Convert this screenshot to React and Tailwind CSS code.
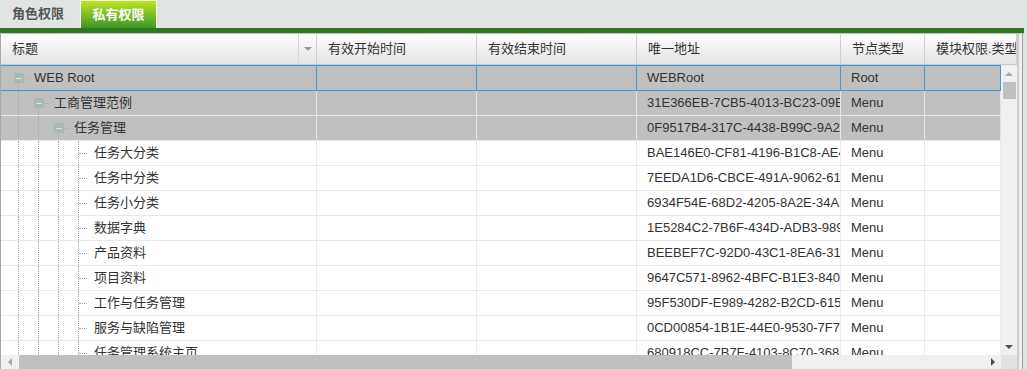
import React from 'react'

const cols = [
  { key: 'title', label: '标题', w: 316 },
  { key: 'start', label: '有效开始时间', w: 160 },
  { key: 'end', label: '有效结束时间', w: 160 },
  { key: 'url', label: '唯一地址', w: 204 },
  { key: 'type', label: '节点类型', w: 84 },
  { key: 'perm', label: '模块权限.类型', w: 92 },
]

const rows = [
  { title: 'WEB Root', level: 0, folder: true, url: 'WEBRoot', type: 'Root', hl: true, sel: true },
  { title: '工商管理范例', level: 1, folder: true, url: '31E366EB-7CB5-4013-BC23-09E', type: 'Menu', hl: true },
  { title: '任务管理', level: 2, folder: true, url: '0F9517B4-317C-4438-B99C-9A2', type: 'Menu', hl: true },
  { title: '任务大分类', level: 3, url: 'BAE146E0-CF81-4196-B1C8-AE4', type: 'Menu' },
  { title: '任务中分类', level: 3, url: '7EEDA1D6-CBCE-491A-9062-61', type: 'Menu' },
  { title: '任务小分类', level: 3, url: '6934F54E-68D2-4205-8A2E-34A', type: 'Menu' },
  { title: '数据字典', level: 3, url: '1E5284C2-7B6F-434D-ADB3-989', type: 'Menu' },
  { title: '产品资料', level: 3, url: 'BEEBEF7C-92D0-43C1-8EA6-31', type: 'Menu' },
  { title: '项目资料', level: 3, url: '9647C571-8962-4BFC-B1E3-840', type: 'Menu' },
  { title: '工作与任务管理', level: 3, url: '95F530DF-E989-4282-B2CD-615', type: 'Menu' },
  { title: '服务与缺陷管理', level: 3, url: '0CD00854-1B1E-44E0-9530-7F7', type: 'Menu' },
  { title: '任务管理系统主页', level: 3, url: '680918CC-7B7F-4103-8C70-368', type: 'Menu' },
]

function Guide() {
  return (
    <span className="w-[20px] h-full flex justify-center shrink-0">
      <span className="w-0 h-full border-l border-dotted border-[#a8a8a8]" />
    </span>
  )
}

function TreeCell({ row }) {
  const guides = []
  for (let i = 0; i < row.level; i++) guides.push(<Guide key={i} />)
  return (
    <div className="flex items-center h-full pl-[7px]">
      {guides}
      {row.folder ? (
        <span className="w-[20px] h-full relative shrink-0 flex items-center">
          <span className="absolute left-[10px] top-1/2 h-1/2 border-l border-dotted border-[#a8a8a8]" />
          <span className="absolute left-[15px] top-1/2 w-[5px] border-t border-dotted border-[#a8a8a8]" />
          <span className="relative ml-[6px] w-[10px] h-[10px] bg-[#a9bab3] flex items-center justify-center">
            <span className="w-[6px] h-px bg-[#dfe7e3]" />
          </span>
        </span>
      ) : (
        <span className="w-[20px] h-full relative shrink-0">
          <span className="absolute left-[10px] top-0 h-full border-l border-dotted border-[#a8a8a8]" />
          <span className="absolute left-[11px] top-1/2 w-[8px] border-t border-dotted border-[#a8a8a8]" />
        </span>
      )}
      <span className="ml-[6px] whitespace-nowrap">{row.title}</span>
    </div>
  )
}

function Tri({ dir }) {
  const cls = {
    up: 'border-l-[4px] border-r-[4px] border-b-[4px] border-l-transparent border-r-transparent border-b-[#a8a8a8]',
    down: 'border-l-[4px] border-r-[4px] border-t-[4px] border-l-transparent border-r-transparent border-t-[#505050]',
    left: 'border-t-[4px] border-b-[4px] border-r-[4px] border-t-transparent border-b-transparent border-r-[#a8a8a8]',
    right: 'border-t-[4px] border-b-[4px] border-l-[4px] border-t-transparent border-b-transparent border-l-[#505050]',
  }[dir]
  return <span className={`w-0 h-0 ${cls}`} />
}

export default function App() {
  return (
    <div
      className="w-[1027px] h-[369px] overflow-hidden bg-[#e0e5e4] flex flex-col text-[13px] text-[#333]"
      style={{ fontFamily: '"Liberation Sans", "Noto Sans CJK SC", sans-serif' }}
    >
      {/* tabs */}
      <div className="h-[28px] flex items-stretch shrink-0">
        <div className="w-[80px] flex items-center pl-[12px] font-bold text-[#555]">角色权限</div>
        <div className="w-[77px] h-[28px] border border-b-0 border-[#f4fff0] bg-gradient-to-b from-[#b8e81c] to-[#3c9628] flex items-center justify-center font-bold text-white">
          私有权限
        </div>
      </div>
      <div className="h-[5px] bg-[#2b7a1f] w-[1024px] shrink-0" />
      <div className="h-px bg-[#b9c6b9] w-[1024px] shrink-0" />

      <div className="flex flex-1 min-h-0">
        <div className="w-[1017px] flex flex-col border-l border-[#a8a8a8] bg-white min-h-0">
          {/* header */}
          <div className="h-[31px] flex shrink-0 bg-gradient-to-b from-[#fdfdfd] to-[#e4e4e4] border-b border-[#c8c8c8]">
            {cols.map((c, i) => (
              <div
                key={c.key}
                style={{ width: c.w }}
                className="h-full flex items-center border-r border-[#d0d0d0] shrink-0 overflow-hidden"
              >
                <span className="pl-[11px] flex-1 whitespace-nowrap">{c.label}</span>
                {i === 0 && (
                  <span className="w-[18px] h-full border-l border-[#d6d6d6] flex items-center justify-center">
                    <span className="w-0 h-0 border-l-[4px] border-r-[4px] border-t-[4px] border-l-transparent border-r-transparent border-t-[#999]" />
                  </span>
                )}
              </div>
            ))}
          </div>

          {/* body */}
          <div className="flex flex-1 min-h-0">
            <div className="w-[1000px] overflow-hidden">
              {rows.map((r, ri) => (
                <div
                  key={ri}
                  className={`flex ${r.sel ? 'h-[26px] border-y border-[#3d9ae0]' : 'h-[25px] border-b border-[#e8e8e8]'} ${r.hl ? 'bg-[#c0c0c0]' : 'bg-white'}`}
                >
                  {cols.map((c, i) => (
                    <div
                      key={c.key}
                      style={{ width: i === cols.length - 1 ? 76 : c.w }}
                      className={`h-full shrink-0 border-r ${r.sel ? 'border-[#3d9ae0]' : r.hl ? 'border-[#e4e4e4]' : 'border-[#ececec]'} overflow-hidden flex items-center`}
                    >
                      {c.key === 'title' ? (
                        <TreeCell row={r} />
                      ) : (
                        <span className="pl-[10px] whitespace-nowrap">{r[c.key] || ''}</span>
                      )}
                    </div>
                  ))}
                </div>
              ))}
            </div>
            {/* vertical scrollbar */}
            <div className="w-[16px] bg-[#f0f0f0] flex flex-col items-center">
              <div className="h-[17px] flex items-center justify-center"><Tri dir="up" /></div>
              <div className="w-[13px] h-[17px] bg-[#c0c0c0]" />
              <div className="flex-1" />
              <div className="h-[17px] flex items-center justify-center"><Tri dir="down" /></div>
            </div>
          </div>

          {/* horizontal scrollbar */}
          <div className="h-[14px] flex shrink-0 bg-[#f0f0f0]">
            <div className="w-[18px] flex items-center justify-center"><Tri dir="left" /></div>
            <div className="w-[773px] bg-[#c0c0c0]" />
            <div className="flex-1" />
            <div className="w-[17px] flex items-center justify-center"><Tri dir="right" /></div>
            <div className="w-[16px] bg-[#e2e2e2]" />
          </div>
        </div>
        <div className="w-[2px] bg-[#c9d1cd]" />
        <div className="w-[3px] bg-[#eef1f0]" />
        <div className="w-px bg-[#9aa39f]" />
        <div className="w-[4px] bg-[#dfe4e3]" />
      </div>
    </div>
  )
}
